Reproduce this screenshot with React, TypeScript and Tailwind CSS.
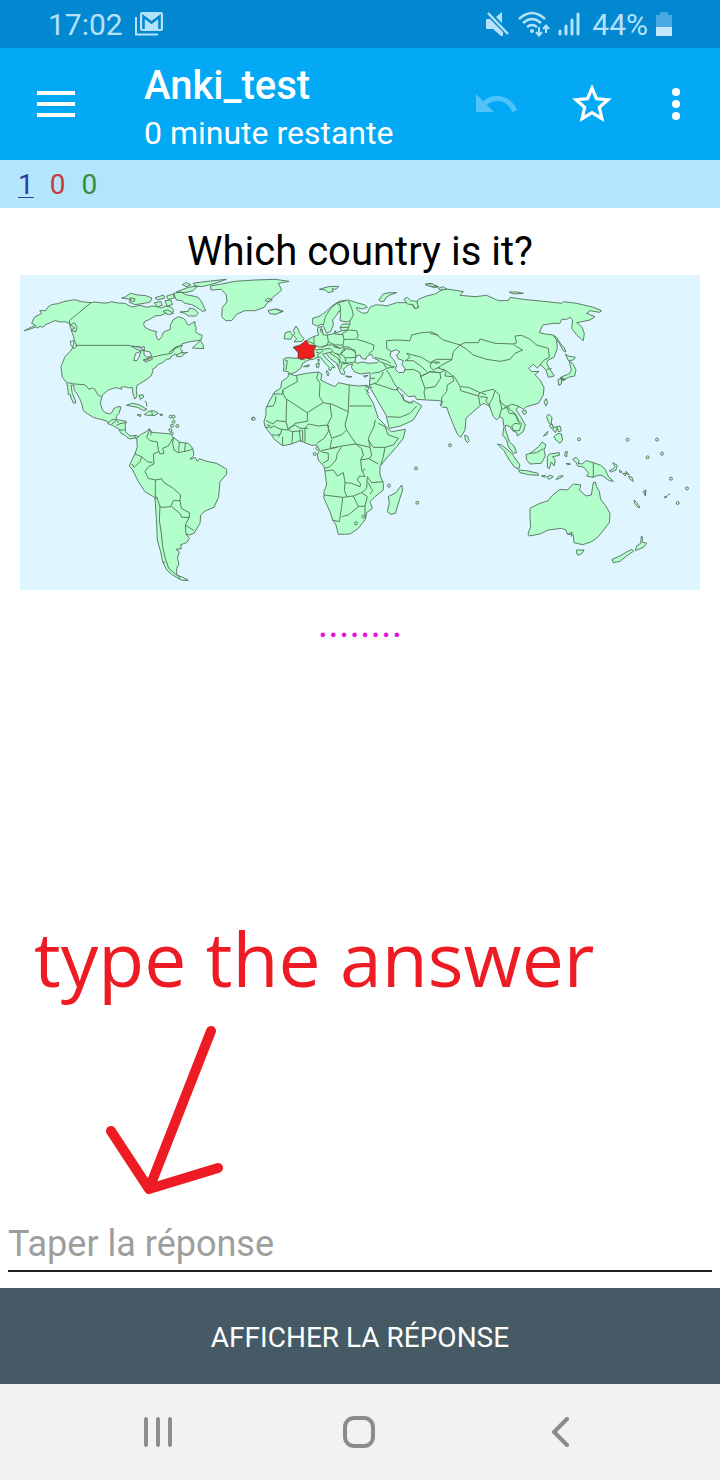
import React from "react";

const LAND = "#b3ffcb";
const SEA = "#dff5ff";
const BORDER = "#55745f";

function Region({ x, y, land, borders, children }: { x: number; y: number; land: string; borders?: string; children?: React.ReactNode }) {
  return (
    <g transform={`translate(${x} ${y}) scale(0.33333)`}>
      <path d={land} fill={LAND} />
      {children}
      {borders && <path d={borders} fill="none" />}
    </g>
  );
}

function Islets({ points }: { points: number[][] }) {
  return (
    <>
      {points.map(([cx, cy]) => (
        <circle key={`${cx}-${cy}`} cx={cx} cy={cy} r="4.5" fill={LAND} />
      ))}
    </>
  );
}

function WorldMap() {
  return (
    <svg viewBox="20 275 680 315" className="block w-full" role="img" aria-label="World map">
      <rect x="20" y="275" width="680" height="315" fill={SEA} />
      <g stroke={BORDER} strokeWidth="2.8" strokeLinejoin="round">
        {/* North and Central America, Greenland */}
        <Region
          x={15}
          y={270}
          land="M28 182L48 172 62 166 50 160 58 142 80 130 74 122 92 122 98 112 110 104 128 101 150 94 178 89 200 95 228 98 240 96 262 99 276 99 290 95 308 99 330 100 340 106 352 111 375 106 398 112 410 108 425 110 440 114 450 108 470 112 476 122 470 130 452 130 438 136 420 138 404 148 388 155 386 164 390 172 405 180 425 185 422 192 425 200 427 207 432 210 440 200 446 186 466 178 466 166 474 150 490 140 505 145 512 152 515 160 522 166 530 160 540 155 540 168 544 172 542 185 550 192 562 196 558 210 546 212 520 216 500 222 490 232 478 235 462 248 484 230 503 226 496 236 502 242 498 245 508 250 518 247 500 252 488 260 483 252 470 258 466 266 455 268 440 280 430 283 420 294 412 298 414 304 408 318 396 328 385 334 366 346 364 360 366 378 360 387 354 372 352 352 340 354 330 350 318 352 320 358 306 353 295 355 280 360 262 375 256 400 262 418 270 428 284 432 292 426 296 416 308 410 318 411 312 430 306 436 302 448 318 451 334 454 330 468 332 485 338 492 345 498 365 496 372 506 358 504 345 507 336 502 328 494 318 490 312 478 295 467 280 462 278 454 258 448 248 446 235 442 222 434 205 422 200 400 194 386 186 372 178 360 176 345 168 346 172 370 178 384 183 398 176 400 168 384 166 374 160 374 158 352 155 338 142 322 138 290 150 260 166 244 172 235 178 212 176 200 172 190 163 160 150 155 138 156 120 152 110 156 90 165 84 172 74 168 70 174 62 171 44 178Z"
          borders="M228 98L163 152 165 165M182 226L342 226 352 230 372 230 388 242M388 272L400 268 410 262 440 255 458 252 470 250 484 230M158 338L178 342 208 344 216 350 222 358 232 354 240 358 248 374 258 380M278 460L290 450 302 448M290 462L304 452 312 458M304 466L318 460 334 458M312 480L328 480M166 165L178 158 186 172 182 186 168 180 180 174ZM166 214L178 212 186 228 176 236 168 226Z"
        >
          <path
            fill={LAND}
            d="M320 84L332 80 346 70 368 75 392 77 410 84 406 96 388 100 360 104 342 96 348 88ZM345 84L360 86 358 94 346 93ZM420 84L445 75 450 84 428 90ZM418 98L438 95 442 106 426 110ZM455 78L475 72 478 84 460 88ZM450 92L468 90 472 104 456 108ZM476 70L498 66 512 74 534 78 550 82 560 96 572 122 562 124 546 112 530 104 510 100 500 92 484 90 480 80ZM484 66L520 52 548 48 534 62 510 68ZM502 44L512 38 528 44 516 50ZM535 40L560 36 634 28 606 38 586 44 560 50 540 48ZM495 126L520 124 524 114 540 118 550 130 542 138 520 138 510 130ZM444 124L458 120 476 130 460 134ZM532 234L545 222 556 212 564 224 566 236ZM483 257L498 248 510 250 500 260 488 260ZM334 406L352 400 372 404 396 418 386 422 368 412ZM388 434L400 424 416 422 430 430 420 436 400 436ZM366 434L378 434 376 440ZM434 432L444 434 438 438ZM372 376L384 374 386 382 376 388ZM388 392L394 398 396 410M410 422L412 436M586 48L620 42 660 34 720 30 780 28 822 34 790 40 800 60 760 94 748 112 720 122 690 122 666 132 650 152 632 152 620 140 622 112 636 96 634 74 618 58 588 60ZM758 84L772 90 764 96 750 92ZM764 122L785 117 805 124 780 132 766 130Z"
          />
          <path fill={SEA} d="M350 228L375 232 388 230 388 242 372 240 360 236ZM356 272L362 250 378 244 372 262 366 272ZM386 242L405 246 410 258 396 262 388 256ZM384 270L410 262 412 268 392 276Z" />
          <Islets points={[[467, 440], [476, 440], [476, 455], [471, 467], [487, 468], [466, 480], [470, 490], [714, 446]]} />
        </Region>

        {/* South America */}
        <Region
          x={110}
          y={400}
          land="M80 115L92 104 110 94 118 86 122 96 135 98 160 100 182 102 190 112 210 127 235 130 248 145 252 165 240 178 256 172 262 184 268 176 290 184 320 190 350 208 350 222 330 245 326 290 312 322 285 333 272 345 270 370 252 400 238 405 228 402 238 415 230 428 212 434 214 446 198 448 208 455 202 475 207 492 200 505 200 525 218 532 235 541 215 541 188 525 170 510 158 485 152 455 142 420 140 370 135 293 105 275 85 245 68 210 58 198 66 180 75 162 82 140Z"
          borders="M118 90L110 112 120 122 142 126 145 150 150 162 162 160 158 145 175 138 190 112M145 155L130 162 132 192 115 200 105 215 115 235 136 240 136 295 142 295M75 162L95 170 90 185 72 202 66 192M95 170L112 185 128 188M136 240L155 236 162 248 190 265 212 285 210 302 190 302 182 320 158 322 150 320 140 290M210 302L214 325 238 338 238 352 215 352 212 342 185 320M190 112L188 130 192 150 204 158 226 154 240 150 248 145M208 125L206 155M226 130L224 154M238 350L226 375 252 392M226 375L228 402M150 320L148 360 154 400 158 440 166 475 176 505 200 525M118 86L124 96 122 106M78 115L74 108M204 525L210 538M158 485L166 488"
        />

        {/* Africa */}
        <Region
          x={250}
          y={360}
          land="M115 40L135 47 170 40 205 36 216 42 212 60 232 70 255 80 265 68 298 75 325 78 352 76 356 86 350 97 370 130 385 175 400 190 415 208 425 215 466 208 460 235 440 260 405 300 390 320 390 345 400 370 400 390 375 410 360 425 367 445 350 458 346 478 325 505 300 522 265 523 258 495 248 480 240 455 222 415 222 395 230 375 225 335 222 320 205 300 202 285 208 270 200 255 185 256 165 248 150 242 125 252 98 257 75 240 62 222 45 200 42 185 48 165 48 145 60 120 75 95 92 85 95 65 115 50Z"
          borders="M140 48L142 65 100 88 98 102M68 102L98 102 98 90M78 108L76 125 70 138 50 140M98 100L110 120 108 185 78 182 70 192 48 182M110 118L172 158 220 128 208 110 210 70 200 55 205 36M172 158L172 184 135 190 115 210 108 185M220 128L240 132 245 170 232 195 205 198 175 192 165 205 165 245M240 130L295 155 295 140 298 75M298 138L365 138M295 155L285 195 290 210 275 224 245 235 232 195M290 210L318 252 360 262 355 235 372 200 376 180M385 190L405 200 415 225 445 235 430 255 405 262 370 262 355 240M405 262L400 290 392 315M360 262L365 285 358 297 385 312M335 266L340 285 332 300 360 295M245 238L240 265 275 258 318 252 335 266M275 260L262 280 258 300 240 320 225 325M262 262L212 272M212 275L235 280 235 300 218 310M225 333L250 330 262 348 280 338 285 368 305 370 330 380 332 372 322 360 328 348 345 350 335 330 332 300M285 368L283 392 290 408M222 405L278 412 310 408 335 398 350 385 352 350 365 368 400 365M355 368L362 382 368 392 360 402M278 412L275 440 268 485 248 480M275 470L295 465 325 440 310 408M325 440L345 438 352 410 335 398M345 438L345 470M60 205L72 198 85 205 95 208 92 222 76 226 66 224M95 208L115 210 125 215 155 212M85 232L90 222M98 230L98 257M128 215L126 250M148 212L152 245M158 210L158 245M115 205L135 195 150 205 175 205M200 250L222 235 235 215 235 195M50 195L64 198M345 86L358 100M338 335L345 325M45 202L60 202"
        >
          <path fill={LAND} d="M455 375L458 390 448 420 436 460 422 463 412 455 418 430 415 410 438 398Z" />
          <Islets points={[[318, 490], [340, 470], [11, 176], [194, 282], [202, 265], [498, 325], [417, 377], [502, 428]]} />
        </Region>

        {/* Europe and the Middle East */}
        <Region
          x={240}
          y={270}
          land="M605 62L585 72 560 78 535 88 530 98 536 112 524 116 512 95 495 88 500 98 470 98 440 108 425 105 405 105 390 112 382 128 368 130 352 120 350 112 365 117 382 112 375 105 350 98 325 90 300 93 275 108 258 125 240 138 218 145 218 162 232 168 246 162 252 172 260 190 272 184 280 165 278 150 290 135 298 122 302 132 300 152 320 156 330 153 330 162 308 162 300 172 305 182 285 190 262 195 250 195 248 185 242 178 246 170 234 172 232 180 236 195 220 200 205 208 198 214 180 225 162 230 168 240 175 250 175 265 140 263 130 268 132 290 130 303 145 305 152 312 168 306 182 295 188 280 205 270 220 268 232 262 242 262 255 280 268 292 266 300 272 302 276 292 285 292 272 278 258 265 248 252 258 250 270 265 290 280 298 300 302 310 312 314 315 308 310 298 318 290 325 285 338 282 334 292 344 306 362 312 390 308 390 325 388 348 405 378 438 435 448 475 482 468 520 450 545 408 530 398 520 392 508 400 490 388 482 372 470 358 475 352 490 365 505 380 525 378 530 388 560 390 605 392"
          borders="M250 165L256 140 270 118 290 100 318 92M302 125L300 105 290 100M325 92L335 115 340 135 330 153M305 182L322 180 330 162M300 172L328 172M325 180L350 182 355 200 345 208 312 208 308 190 325 180M312 208L308 230 330 232 345 248M350 208L375 215 402 225 400 240 385 252M262 195L265 215 285 225 308 225M285 192L308 194M222 200L222 225 240 232 262 225 265 215M202 212L222 222M245 232L262 225 280 225 300 235M225 240L250 238 270 235 280 245 258 250M228 246L240 250 250 242M280 230L300 235 308 232 315 240 300 255 280 248M302 250L312 236 345 240 348 262 318 264 302 252M315 262L318 280 345 276M270 250L290 262 300 275 318 280M290 250L300 262 298 282M302 298L305 282 325 280M290 280L300 290M135 270L142 272 138 300M175 265L195 270M430 280L440 295 420 306 395 310M405 262L440 272 452 280M420 275L445 285 462 292M440 295L465 290M455 245L440 235 440 212 470 210 510 212 515 195 545 188 575 186 600 198M440 300L455 325 465 345 475 355M390 345L410 338 425 318 430 306M402 340L440 352 462 360 475 358M390 325L405 325M495 272L510 262 500 250 545 262 570 278 600 275M492 300L520 298 540 308 542 320 570 305 600 308M495 272L520 272 545 290 560 305M542 320L555 355 552 366 556 388M442 440L480 442 510 430 530 408M488 372L492 392 520 400M232 262L235 250M375 350L396 352"
        >
          <path fill={SEA} d="M345 276L348 258 360 255 364 264 378 268 380 260 394 252 400 264 418 272 412 278 385 280 366 276 352 280ZM453 245L470 239 480 246 470 254 474 266 490 272 486 284 496 296 492 307 476 308 466 298 470 286 460 268 450 258Z" />
          <path
            fill={LAND}
            d="M160 182L168 168 176 180 178 190 192 206 186 214 162 216 170 206 160 196 164 190ZM132 206L136 188 150 184 158 196 152 208ZM84 122L105 117 126 124 110 132 90 132ZM238 58L258 52 266 50 296 49 288 58 276 56 280 64 264 68 256 60ZM416 90L430 72 448 68 470 68 450 75 438 82 432 94 420 94ZM556 44L570 40 596 50 580 52ZM190 290L208 284 206 290ZM228 282L238 280 236 292 230 292ZM232 268L238 268 236 277ZM260 302L268 310 264 318 260 310ZM316 318L336 320 326 322ZM370 318L384 316 376 322ZM240 180L248 178 246 188ZM282 186L288 182 286 188Z"
          />
          <path fill="#f01e1e" stroke="#9a2020" d="M198 211L208 225 228 227 221 242 223 259 210 266 195 264 184 269 174 263 176 246 160 233 178 228 186 222Z" />
        </Region>

        {/* Asia */}
        <Region
          x={400}
          y={270}
          land="M116 65L135 56 160 60 190 65 180 76 225 80 260 76 295 92 325 92 330 82 370 88 430 94 485 100 490 95 530 100 580 112 605 122 598 127 570 122 560 130 585 140 570 150 545 155 530 158 545 170 553 190 550 212 530 195 515 175 518 150 510 142 500 148 485 148 480 160 460 160 428 165 418 188 435 192 460 195 470 210 472 235 462 262 445 270 440 280 450 298 463 318 445 322 438 300 428 290 420 285 412 295 400 283 386 295 395 305 417 304 405 314 420 330 432 352 430 375 415 400 380 410 370 418 358 410 348 418 362 440 376 465 370 485 352 498 350 488 338 482 330 470 318 465 315 474 320 490 328 515 342 528 350 548 340 550 325 530 320 510 308 495 312 470 308 445 300 440 290 450 280 440 270 412 262 405 250 400 240 408 225 420 198 445 195 480 182 502 172 492 150 440 140 412 128 412 120 405 128 395 116 392"
          borders="M180 225L130 210 110 195 90 190M180 225L195 218 235 218 240 207 285 220 340 222 350 218 345 198 365 196 390 208 410 225 445 235 448 262 430 272 420 285M180 225L200 238 220 255 260 268 300 274 330 268 345 250 368 240 350 230 340 222M180 225L160 245 155 270 125 285 115 295 135 300 165 322 180 350 205 352 240 368 262 362 280 358 298 374 300 395 320 412 335 402 358 410M138 304L135 318 158 320 162 332 142 345 140 365 125 382 125 405M180 352L182 362 235 378 240 368M235 375L240 405M240 380L262 382 258 394 270 408M258 374L245 370M270 412L268 400 278 385 285 362M300 390L305 415 298 440M305 418L320 412 328 430 345 432 355 455 365 460 358 482 340 482 335 468 345 460 360 462M320 405L328 418 345 430 358 455M312 415L318 410M75 355L105 350 122 325 120 308 135 300M60 320L90 305 120 308M95 275L110 268 155 268M95 275L90 290 100 300 120 290M105 280L120 278M440 298L455 296"
        >
          <path
            fill={LAND}
            d="M76 42L98 42 112 52 86 48ZM115 55L130 50 140 58 120 60ZM328 66L350 66 370 70 340 72ZM12 88L22 82 32 92 50 94 55 112 45 116 40 104 22 102ZM460 196L470 202 482 222 492 232 498 246 490 242 478 220ZM496 252L504 258 526 262 520 270 505 272 502 264ZM508 274L518 280 528 300 524 318 505 322 492 330 480 324 490 318 508 312 514 300ZM474 328L485 326 484 342 476 346ZM484 322L496 328 488 332ZM432 396L438 386 443 398 438 408ZM366 424L376 420 380 428 372 434ZM194 496L202 498 208 512 202 518 196 510ZM440 440L446 432 456 442 454 460 458 466 446 458ZM430 498L444 484 440 494ZM448 466L456 462 460 472 454 476ZM458 478L464 470 472 474 466 488ZM470 470L480 468 484 482 476 486ZM462 500L474 490 484 492 488 510 480 520 468 510Z"
          />
          <Islets points={[[150, 526], [537, 508]]} />
        </Region>

        {/* Indonesia and Oceania */}
        <Region
          x={480}
          y={420}
          land="M150 265L180 250 205 242 215 228 240 208 262 210 280 192 303 195 298 210 318 228 334 225 340 188 346 186 350 200 358 215 362 238 376 256 390 280 388 308 355 350 335 365 308 374 282 368 280 345 262 342 258 330 245 325 205 330 180 342 148 348 144 342 152 320 150 290Z"
        >
          <path
            fill={LAND}
            d="M52 72L65 75 95 100 120 135 116 147 104 142 88 120 72 92ZM116 150L140 152 174 160 176 166 146 164 120 158ZM138 104L150 100 176 80 186 66 198 74 192 90 196 108 184 130 150 132 140 120ZM202 112L208 102 238 98 238 106 218 110 226 120 222 138 214 126 208 146 202 142ZM184 168L196 166 194 172ZM200 170L212 166 220 170 206 178ZM228 178L238 168 250 168 238 176ZM256 96L262 94 260 110 254 108ZM258 130L272 132 262 134ZM278 118L288 112 298 122 294 130 306 132 318 122 340 128 362 136 376 148 384 168 400 184 388 182 366 166 352 166 340 172 320 168 326 160 312 142 294 138 288 128ZM388 152L398 148 405 140 398 128 412 136 408 150 394 156ZM418 150L426 156 420 158ZM428 160L438 160 436 168ZM438 154L448 164 440 162ZM446 168L456 172 460 184 450 178ZM462 240L470 248 480 262 474 262 464 250ZM490 214L498 210 496 228ZM552 232L560 228 558 234ZM562 226L570 222M484 348L488 352 486 366 500 370 490 382 466 392 470 378 482 370ZM396 418L420 408 440 396 456 388 460 394 440 408 420 424 400 428ZM290 390L312 390 306 400 294 406 290 400Z"
          />
          <path d="M340 128L340 172M150 100L170 98 190 86M263 344L276 336 274 350M494 215L496 220" fill="none" />
          <Islets points={[[443, 59], [531, 59], [546, 101], [503, 112], [573, 176], [621, 205], [593, 249]]} />
        </Region>
      </g>
    </svg>
  );
}

function StatusBar() {
  return (
    <div className="flex h-12 items-center justify-between bg-[#0288d1] pr-12 pl-12 text-[30px] text-[#b5e2fa]">
      <div className="flex items-center gap-3">
        <span>17:02</span>
        <svg viewBox="0 0 28 24" className="h-6 w-7" fill="none">
          <path d="M1 5V22.500H23" stroke="#b5e2fa" strokeWidth="2" />
          <rect x="5" y="0" width="23" height="19" rx="2" fill="#b5e2fa" />
          <path d="M8.500 17V4.500L16.500 10.500 24.500 4.500V17" stroke="#0288d1" strokeWidth="2.600" />
        </svg>
      </div>
      <div className="flex items-center gap-2">
        <svg viewBox="0 0 24 26" className="h-[26px] w-6" fill="#b5e2fa">
          <path d="M1 8H4L17 21V25H15L7 18H1Q0 18 0 17V9Q0 8 1 8ZM10 6L16 1V12Z" />
          <path d="M2 2L22 23" stroke="#b5e2fa" strokeWidth="2.400" />
        </svg>
        <svg viewBox="0 0 32 26" className="h-[26px] w-8" fill="none" stroke="#b5e2fa" strokeWidth="2.400">
          <path d="M1 8Q14-4 27 8M5 12Q14 4 23 12M9 16Q14 12 19 16" />
          <circle cx="14" cy="20" r="2" fill="#b5e2fa" stroke="none" />
          <path d="M21 16V24M18 21L21 24.500 24 21M28 22V15M25 18L28 14.500 31 18" strokeWidth="2" />
        </svg>
        <svg viewBox="0 0 22 24" className="h-6 w-[22px]" stroke="#b5e2fa" strokeWidth="3" strokeLinecap="round">
          <path d="M2 19V22M8 14V22M14 8V22M20 2V22" />
        </svg>
        <span className="ml-1">44%</span>
        <svg viewBox="0 0 16 24" className="h-6 w-4">
          <path d="M4 0H12V3H16V15H0V3H4Z" fill="#48a9e2" />
          <path d="M0 15H16V23Q16 24 15 24H1Q0 24 0 23Z" fill="#c4e6fa" />
        </svg>
      </div>
    </div>
  );
}

function Toolbar() {
  return (
    <header className="flex h-28 items-center bg-[#03a9f4] pr-5 pl-8 text-white">
      <button type="button" aria-label="Menu" className="flex size-12 items-center justify-center">
        <svg viewBox="0 0 38 26" className="h-[26px] w-[38px]" fill="currentColor">
          <path d="M0 0H38V4H0ZM0 11H38V15H0ZM0 22H38V26H0Z" />
        </svg>
      </button>
      <div className="ml-16 flex-1 pt-2">
        <h1 className="text-[40px] leading-[50px] font-medium">Anki_test</h1>
        <p className="text-[32px] leading-[44px]">0 minute restante</p>
      </div>
      <button type="button" aria-label="Annuler" disabled className="mr-12">
        <svg viewBox="0 0 24 24" className="size-12" fill="#4fc3f7">
          <path d="M12.5 8c-2.650 0-5.050.990-6.900 2.600L2 7v9h9l-3.620-3.620c1.390-1.160 3.160-1.880 5.120-1.880 3.540 0 6.550 2.310 7.600 5.500l2.370-.780C21.080 11.030 17.150 8 12.500 8z" />
        </svg>
      </button>
      <button type="button" aria-label="Marquer" className="mr-9">
        <svg viewBox="0 0 24 24" className="size-12" fill="currentColor">
          <path d="M22 9.240l-7.190-.620L12 2 9.190 8.630 2 9.240l5.460 4.730L5.820 21 12 17.270 18.180 21l-1.630-7.030L22 9.240zM12 15.400l-3.760 2.270 1-4.280-3.320-2.880 4.380-.380L12 6.100l1.710 4.040 4.380.380-3.320 2.880 1 4.280L12 15.400z" />
        </svg>
      </button>
      <button type="button" aria-label="Plus d'options">
        <svg viewBox="0 0 24 24" className="size-12" fill="currentColor">
          <circle cx="12" cy="6" r="2" />
          <circle cx="12" cy="12" r="2" />
          <circle cx="12" cy="18" r="2" />
        </svg>
      </button>
    </header>
  );
}

export default function App() {
  return (
    <div className="flex min-h-screen flex-col bg-white font-[Roboto,sans-serif]">
      <StatusBar />
      <Toolbar />
      <div className="flex h-12 items-center gap-4 bg-[#b3e5fc] px-[18px] pt-0.5 text-[28px]">
        <span className="text-[#303f9f] underline decoration-1 underline-offset-3">1</span>
        <span className="text-[#c63a3c]">0</span>
        <span className="text-[#388e3c]">0</span>
      </div>

      <main className="flex flex-1 flex-col">
        <section className="px-5 pt-5 text-center text-[40px] text-black">
          <h2 className="leading-[47px]">Which country is it?</h2>
          <WorldMap />
          <p className="pt-2.5 leading-[47px] text-[#e613dc]">........</p>
        </section>

        <div className="mt-auto text-[#ed1c24]">
          <p className="px-[34px] font-['Open_Sans','Noto_Sans',sans-serif] text-[75px] leading-[104px] font-medium">type the answer</p>
          <svg viewBox="0 0 124 172" className="mt-3 ml-[102px] h-[172px] w-[124px]" fill="none" stroke="currentColor" strokeWidth="10" strokeLinecap="round" strokeLinejoin="round">
            <path d="M109 9L47 167M9 109L47 167 116 146" />
          </svg>
        </div>

        <div className="px-2 pt-6 pb-4">
          <input
            type="text"
            aria-label="Taper la réponse"
            placeholder="Taper la réponse"
            className="block h-[54px] w-full border-b-2 border-[#212121] text-[36px] text-black outline-none placeholder:text-[#9e9e9e]"
          />
        </div>
      </main>

      <button type="button" className="h-24 bg-[#455a64] pt-1 text-[28px] text-white">
        AFFICHER LA RÉPONSE
      </button>

      <nav className="flex h-24 items-center justify-between bg-[#f2f2f2] pr-[136px] pl-[134px] text-[#8c8c8c]">
        <button type="button" aria-label="Applications récentes" className="flex size-12 items-center justify-center">
          <svg viewBox="0 0 28 30" className="h-[30px] w-7" stroke="currentColor" strokeWidth="4" strokeLinecap="round">
            <path d="M2 2V28M14 2V28M26 2V28" />
          </svg>
        </button>
        <button type="button" aria-label="Accueil" className="flex size-12 items-center justify-center">
          <svg viewBox="0 0 32 32" className="size-8" fill="none" stroke="currentColor" strokeWidth="4">
            <rect x="2" y="2" width="28" height="28" rx="9" />
          </svg>
        </button>
        <button type="button" aria-label="Retour" className="flex size-12 items-center justify-center">
          <svg viewBox="0 0 18 30" className="h-[30px] w-[18px]" fill="none" stroke="currentColor" strokeWidth="4" strokeLinecap="round" strokeLinejoin="round">
            <path d="M16 2L3 15 16 28" />
          </svg>
        </button>
      </nav>
    </div>
  );
}
